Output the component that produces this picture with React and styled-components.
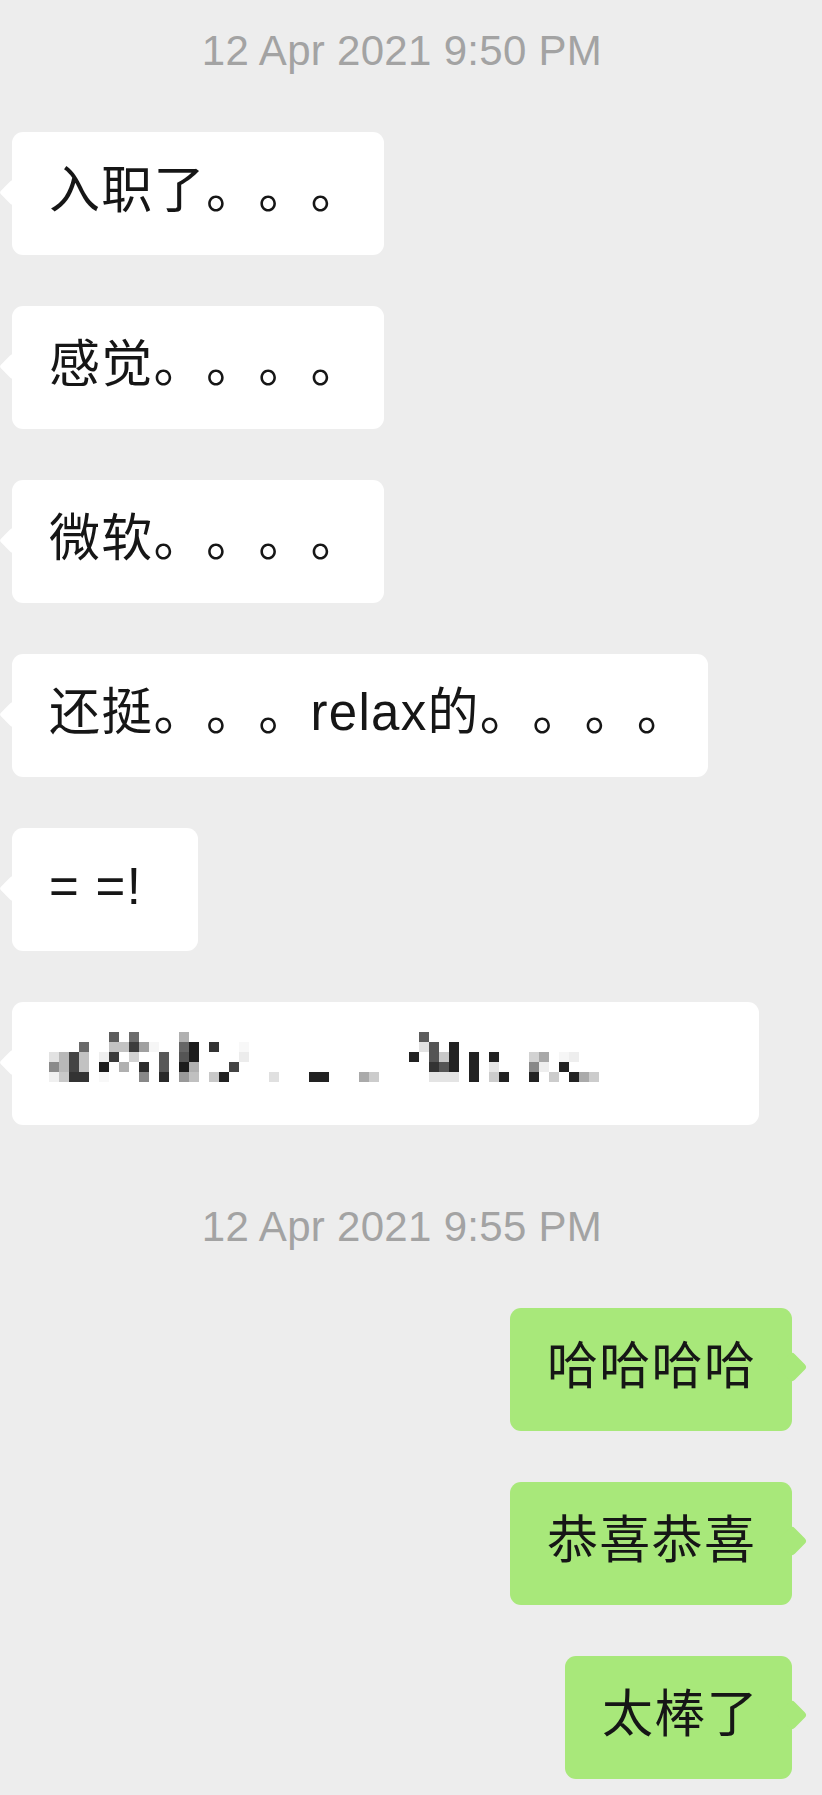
import React from 'react';
import styled, { createGlobalStyle } from 'styled-components';

const GlobalStyle = createGlobalStyle`
  html, body {
    margin: 0;
    padding: 0;
    background: #ededed;
  }
  body {
    font-family: "Liberation Sans", "Noto Sans CJK SC", sans-serif;
  }
`;

const Page = styled.div`
  box-sizing: border-box;
  min-height: 1795px;
  padding-top: 27px;
  display: flex;
  flex-direction: column;
  gap: 78px;
`;

const Group = styled.section`
  display: flex;
  flex-direction: column;
  gap: 51px;
`;

const Time = styled.div`
  font-size: 42px;
  letter-spacing: 0.3px;
  line-height: 48px;
  color: #a3a3a3;
  text-align: center;
  padding-right: 18px;
  margin-bottom: 6px;
`;

const Row = styled.div`
  display: flex;
  justify-content: ${p => (p.$mine ? 'flex-end' : 'flex-start')};
  padding: ${p => (p.$mine ? '0 30px 0 0' : '0 0 0 12px')};
`;

const Bubble = styled.div`
  position: relative;
  box-sizing: border-box;
  width: ${p => p.$width}px;
  height: 123px;
  padding-left: 37px;
  display: flex;
  align-items: center;
  border-radius: 11px;
  background: ${p => (p.$mine ? '#a8e87a' : '#ffffff')};
  color: #161616;
  font-size: 51px;
  white-space: nowrap;

  /* the little arrow pointing at the sender */
  &::before {
    content: '';
    position: absolute;
    width: ${p => (p.$mine ? 22 : 19)}px;
    height: ${p => (p.$mine ? 22 : 19)}px;
    top: ${p => (p.$mine ? 48 : 50.5)}px;
    ${p => (p.$mine ? 'right: -11px;' : 'left: -9.5px;')}
    border-radius: ${p => (p.$mine ? 4 : 3)}px;
    background: inherit;
    transform: rotate(45deg);
  }
`;

const Text = styled.span`
  line-height: 60px;
  margin-top: -6px;
  letter-spacing: 1.3px;
  text-spacing-trim: space-all;
  font-feature-settings: "halt" 0, "chws" 0;
`;

const Mosaic = styled.svg`
  display: block;
  margin-top: -14px;
`;

// pixelated (censored) message, 10px blocks: [column, row, grey]
const cells = [
  [6, 0, '#5c5c5c'], [8, 0, '#6c6c6c'], [13, 0, '#b0b0b0'], [37, 0, '#5c5c5c'],
  [3, 1, '#6a6a6a'], [6, 1, '#c2c2c2'], [7, 1, '#c2c2c2'], [8, 1, '#3c3c3c'], [9, 1, '#a0a0a0'],
  [10, 1, '#f6f6f6'], [13, 1, '#666666'], [14, 1, '#1c1c1c'], [16, 1, '#333333'], [19, 1, '#f8f8f8'],
  [37, 1, '#e2e2e2'], [38, 1, '#555555'], [40, 1, '#222222'],
  [0, 2, '#e2e2e2'], [1, 2, '#b8b8b8'], [2, 2, '#444444'], [3, 2, '#c2c2c2'], [5, 2, '#eeeeee'],
  [6, 2, '#3a3a3a'], [8, 2, '#d2d2d2'], [11, 2, '#585858'], [13, 2, '#555555'], [14, 2, '#1c1c1c'],
  [19, 2, '#ececec'], [36, 2, '#222222'], [38, 2, '#555555'], [39, 2, '#c8c8c8'], [40, 2, '#222222'],
  [42, 2, '#222222'], [44, 2, '#222222'], [48, 2, '#d2d2d2'], [49, 2, '#a8a8a8'], [51, 2, '#f6f6f6'],
  [52, 2, '#eeeeee'],
  [0, 3, '#8a8a8a'], [1, 3, '#b8b8b8'], [2, 3, '#444444'], [3, 3, '#c2c2c2'], [5, 3, '#1c1c1c'],
  [7, 3, '#b0b0b0'], [9, 3, '#2c2c2c'], [11, 3, '#585858'], [13, 3, '#1c1c1c'], [14, 3, '#b0b0b0'],
  [18, 3, '#444444'], [38, 3, '#333333'], [39, 3, '#555555'], [40, 3, '#222222'], [42, 3, '#222222'],
  [44, 3, '#e6e6e6'], [48, 3, '#888888'], [49, 3, '#eeeeee'], [51, 3, '#222222'],
  [0, 4, '#f0f0f0'], [1, 4, '#c8c8c8'], [2, 4, '#333333'], [3, 4, '#333333'], [5, 4, '#f8f8f8'],
  [9, 4, '#888888'], [11, 4, '#2a2a2a'], [13, 4, '#999999'], [14, 4, '#c0c0c0'], [16, 4, '#c8c8c8'],
  [17, 4, '#222222'], [22, 4, '#e0e0e0'], [26, 4, '#222222'], [27, 4, '#222222'], [31, 4, '#aaaaaa'],
  [32, 4, '#cccccc'], [38, 4, '#e4e4e4'], [39, 4, '#e4e4e4'], [40, 4, '#e4e4e4'], [42, 4, '#222222'],
  [44, 4, '#cccccc'], [45, 4, '#222222'], [48, 4, '#222222'], [50, 4, '#cccccc'], [52, 4, '#222222'],
  [53, 4, '#aaaaaa'], [54, 4, '#cccccc'],
];

const groups = [
  {
    time: '12 Apr 2021 9:50 PM',
    messages: [
      { text: '入职了。。。', width: 372 },
      { text: '感觉。。。。', width: 372 },
      { text: '微软。。。。', width: 372 },
      { text: '还挺。。。relax的。。。。', width: 696 },
      { text: '= =!', width: 186 },
      { mosaic: true, width: 747 },
    ],
  },
  {
    time: '12 Apr 2021 9:55 PM',
    messages: [
      { text: '哈哈哈哈', width: 282, mine: true },
      { text: '恭喜恭喜', width: 282, mine: true },
      { text: '太棒了', width: 227, mine: true },
    ],
  },
];

const App = () => {
  return (
    <Page>
      <GlobalStyle />
      {groups.map(group => (
        <Group key={group.time}>
          <Time>{group.time}</Time>
          {group.messages.map((msg, i) => (
            <Row key={i} $mine={msg.mine}>
              <Bubble $mine={msg.mine} $width={msg.width}>
                {msg.mosaic ? (
                  <Mosaic width="550" height="50" viewBox="0 0 550 50" shapeRendering="crispEdges">
                    {cells.map(([c, r, fill]) => (
                      <rect key={`${c}-${r}`} x={c * 10} y={r * 10} width="10" height="10" fill={fill} />
                    ))}
                  </Mosaic>
                ) : (
                  <Text>{msg.text}</Text>
                )}
              </Bubble>
            </Row>
          ))}
        </Group>
      ))}
    </Page>
  );
};

export default App;
